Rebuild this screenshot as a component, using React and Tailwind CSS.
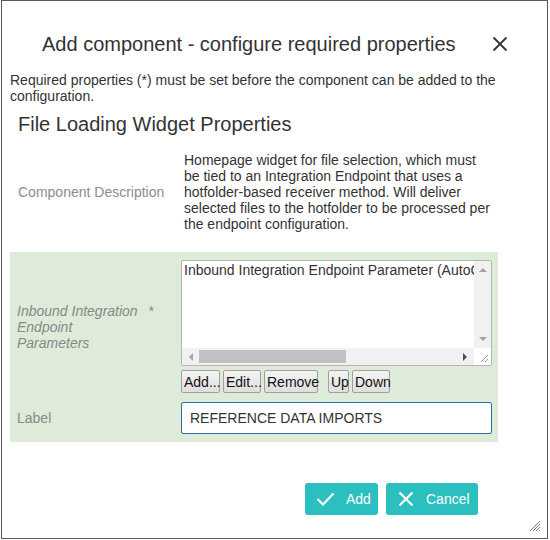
import React from "react";

function Btn({ children, className = "" }) {
  return (
    <button
      className={
        "h-[23px] px-[2px] border border-[#a0a0a0] rounded-[2px] bg-[linear-gradient(#f4f4f4,#dedede)] text-[14px] leading-none text-[#111] " +
        className
      }
    >
      {children}
    </button>
  );
}

export default function App() {
  return (
    <div className="w-[550px] h-[540px] bg-white font-['Liberation_Sans',Arial,sans-serif] text-[#333]">
      <div className="relative ml-px w-[547px] h-[539px] border border-[#5a5a5a] bg-white flex flex-col">
        {/* header */}
        <div className="flex items-center h-[24px] mt-[31px] pl-[40px] pr-[39px]">
          <div className="flex-1 text-[20px] leading-[24px] text-[#333]">
            Add component - configure required properties
          </div>
          <svg width="16" height="16" viewBox="0 0 16 16" className="text-[#333]">
            <path d="M1.5 1.5 L14.5 14.5 M14.5 1.5 L1.5 14.5" stroke="currentColor" strokeWidth="1.8" fill="none" />
          </svg>
        </div>

        <p className="mt-[16px] px-[8px] text-[14px] leading-[16px] text-[#333]">
          Required properties (*) must be set before the component can be added to the configuration.
        </p>

        <div className="mt-[8px] pl-[16px] text-[20px] leading-[24px] text-[#333]">
          File Loading Widget Properties
        </div>

        {/* description row */}
        <div className="flex items-center mt-[16px] pl-[16px]">
          <div className="w-[166px] text-[14px] leading-[16px] text-[#8c8c8c]">Component Description</div>
          <div className="w-[308px] text-[14px] leading-[16px] text-[#333]">
            Homepage widget for file selection, which must be tied to an Integration Endpoint that uses a hotfolder-based receiver method. Will deliver selected files to the hotfolder to be processed per the endpoint configuration.
          </div>
        </div>

        {/* green section */}
        <div className="mt-[20px] ml-[8px] w-[488px] bg-[#dfebd9] pt-[8px] pb-[8px] pl-[7px] flex flex-col gap-[9px]">
          <div className="flex items-center">
            <div className="w-[164px] flex items-start text-[14px] leading-[16px] italic text-[#888]">
              <span className="w-[128px]">Inbound Integration Endpoint Parameters</span>
              <span className="ml-[3px]">*</span>
            </div>
            <div className="flex flex-col gap-[4px]">
              {/* listbox */}
              <div className="w-[311px] h-[106px] border border-[#b5b5b5] rounded-[2px] bg-white flex flex-col overflow-hidden">
                <div className="flex flex-1 min-h-0">
                  <div className="flex-1 overflow-hidden whitespace-nowrap pl-[2px] pt-[1px] text-[14px] leading-[16px] text-[#333]">
                    Inbound Integration Endpoint Parameter (AutoCAD)
                  </div>
                  <div className="w-[17px] bg-[#f1f1f1] flex flex-col items-center justify-between py-[6px]">
                    <svg width="8" height="5" viewBox="0 0 8 5"><path d="M0 5 L4 1 L8 5 Z" fill="#a3a3a3" /></svg>
                    <svg width="8" height="5" viewBox="0 0 8 5"><path d="M0 0 L4 4 L8 0 Z" fill="#a3a3a3" /></svg>
                  </div>
                </div>
                <div className="flex h-[17px]">
                  <div className="flex-1 bg-[#f1f1f1] flex items-center">
                    <div className="w-[17px] flex justify-center">
                      <svg width="5" height="8" viewBox="0 0 5 8"><path d="M5 0 L1 4 L5 8 Z" fill="#a3a3a3" /></svg>
                    </div>
                    <div className="w-[147px] h-[13px] bg-[#c1c1c1]" />
                    <div className="flex-1" />
                    <div className="w-[17px] flex justify-center">
                      <svg width="5" height="8" viewBox="0 0 5 8"><path d="M0 0 L4 4 L0 8 Z" fill="#505050" /></svg>
                    </div>
                  </div>
                  <div className="w-[17px] bg-white flex items-end justify-end p-[2px]">
                    <svg width="10" height="10" viewBox="0 0 10 10">
                      <path d="M9 2 L2 9 M9 6 L6 9" stroke="#9a9a9a" strokeWidth="1" fill="none" />
                    </svg>
                  </div>
                </div>
              </div>
              <div className="flex items-center">
                <Btn className="w-[39px]">Add...</Btn>
                <Btn className="w-[38px] ml-[3px]">Edit...</Btn>
                <Btn className="w-[54px] ml-[3px]">Remove</Btn>
                <Btn className="w-[21px] ml-[10px]">Up</Btn>
                <Btn className="w-[38px] ml-[3px]">Down</Btn>
              </div>
            </div>
          </div>
          <div className="flex items-center">
            <div className="w-[164px] text-[14px] leading-[16px] text-[#888]">Label</div>
            <div className="w-[311px] h-[32px] border border-[#2a6fa8] rounded-[2px] bg-white flex items-center pl-[8px] text-[14px] text-[#333]">
              REFERENCE DATA IMPORTS
            </div>
          </div>
        </div>

        {/* footer */}
        <div className="flex justify-end gap-[8px] mt-[41px] pr-[69px]">
          <button className="w-[73px] h-[32px] rounded-[3px] bg-[#2bbfbf] text-white text-[14px] flex items-center pl-[11px] gap-[11px]">
            <svg width="19" height="14" viewBox="0 0 19 14">
              <path d="M1.5 7 L7 12.5 L17.5 1.5" stroke="white" strokeWidth="2.2" fill="none" />
            </svg>
            <span>Add</span>
          </button>
          <button className="w-[92px] h-[32px] rounded-[3px] bg-[#2bbfbf] text-white text-[14px] flex items-center pl-[12px] gap-[12px]">
            <svg width="16" height="16" viewBox="0 0 16 16">
              <path d="M1.5 1.5 L14.5 14.5 M14.5 1.5 L1.5 14.5" stroke="white" strokeWidth="2.2" fill="none" />
            </svg>
            <span>Cancel</span>
          </button>
        </div>

        {/* resize grip */}
        <svg width="12" height="12" viewBox="0 0 12 12" className="absolute right-[6px] bottom-[6px]">
          <path d="M11 1 L1 11 M11 4 L4 11 M11 7 L7 11 M11 10 L10 11" stroke="#777" strokeWidth="1" fill="none" />
        </svg>
      </div>
    </div>
  );
}
